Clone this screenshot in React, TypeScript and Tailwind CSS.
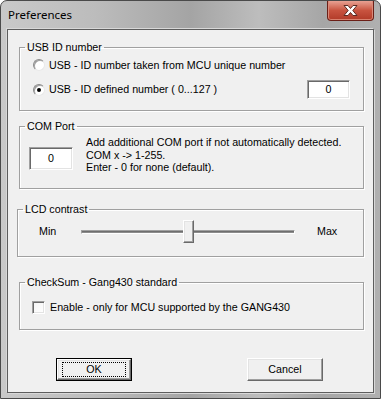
import React from "react";

const sunken =
  "border border-t-[#a0a0a0] border-l-[#a0a0a0] border-b-white border-r-white shadow-[inset_1px_1px_0_#696969,inset_-1px_-1px_0_#e3e3e3]";
const raised =
  "border border-t-white border-l-white border-b-[#696969] border-r-[#696969] shadow-[inset_-1px_-1px_0_#a0a0a0,inset_1px_1px_0_#e3e3e3]";

function Group({
  label,
  className,
  children,
}: {
  label: string;
  className: string;
  children: React.ReactNode;
}) {
  return (
    <fieldset
      className={`border border-[#a0a0a0] shadow-[1px_1px_0_white,inset_1px_1px_0_white] p-0 ${className}`}
    >
      <legend className="ml-[5px] px-[2px] leading-[14px]">{label}</legend>
      {children}
    </fieldset>
  );
}

function Radio({ checked }: { checked?: boolean }) {
  return (
    <span className="relative flex h-[12px] w-[12px] shrink-0 items-center justify-center rounded-full border border-t-[#8a8a8a] border-l-[#8a8a8a] border-b-[#e8e8e8] border-r-[#e8e8e8] bg-white shadow-[inset_1px_1px_0_#a0a0a0]">
      {checked && <span className="h-[4px] w-[4px] rounded-full bg-black" />}
    </span>
  );
}

function CloseButton() {
  return (
    <div className="flex h-[20px] w-[47px] items-center justify-center rounded-b-[4px] border border-t-0 border-[#6b1f17] bg-gradient-to-b from-[#e8a193] via-[#c8533f] to-[#b13a28] shadow-[inset_0_-1px_0_#d9826f,inset_1px_0_0_#d98a7a,inset_-1px_0_0_#d98a7a]">
      <svg width="17" height="13" viewBox="0 0 17 13">
        <path
          d="M2 1.5h4L8.5 4.5l2.5-3h4l-4.2 5 4.2 5h-4L8.5 8.5 6 11.5H2l4.2-5z"
          fill="white"
          stroke="#5a2a22"
          strokeWidth="1"
          strokeLinejoin="round"
        />
      </svg>
    </div>
  );
}

export default function App() {
  return (
    <div
      className="flex h-[399px] w-[381px] flex-col rounded-t-[7px] border border-[#4a4a4a] bg-[linear-gradient(90deg,#c9c9c9_0%,#bcbcbc_25%,#a4a4a4_50%,#bdbdbd_68%,#a6a6a6_85%,#b0b0b0_100%)] text-[10.7px] text-black"
      style={{ fontFamily: '"Liberation Sans", Arial, sans-serif' }}
    >
      <div className="flex h-[28px] shrink-0 items-start">
        <span
          className="ml-[7px] mt-[6px] text-[11.5px] leading-[16px] text-black"
          style={{ fontFamily: '"Noto Sans", "Open Sans", sans-serif' }}
        >
          Preferences
        </span>
        <div className="ml-auto mr-[6px]">
          <CloseButton />
        </div>
      </div>

      <div className="mb-[5px] ml-[6px] flex h-[364px] w-[367px] flex-col border border-[#5d5d5d] bg-[#f0f0f0] shadow-[1px_1px_0_#d8d8d8,-1px_-1px_0_#d8d8d8]">
        <Group label="USB ID number" className="ml-[11px] mt-[10px] h-[71px] w-[345px]">
          <div className="flex flex-col pl-[13px] pr-[13px] pt-[3px]">
            <div className="flex h-[16px] items-center gap-[4px]">
              <Radio />
              <span>USB - ID number taken from MCU unique number</span>
            </div>
            <div className="mt-[7px] flex h-[19px] items-center gap-[4px]">
              <Radio checked />
              <span>USB - ID defined number ( 0...127 )</span>
              <div className={`ml-auto flex h-[19px] w-[43px] items-center justify-center bg-white ${sunken}`}>
                0
              </div>
            </div>
          </div>
        </Group>

        <Group label="COM Port" className="ml-[11px] mt-[8px] h-[70px] w-[345px]">
          <div className="flex items-start pl-[9px] pt-[3px]">
            <div className={`mt-[11px] flex h-[23px] w-[44px] items-center justify-center bg-white ${sunken}`}>
              0
            </div>
            <div className="ml-[13px] leading-[12.5px]">
              <div>Add additional COM port if not automatically detected.</div>
              <div>COM x -&gt; 1-255.</div>
              <div>Enter - 0 for none (default).</div>
            </div>
          </div>
        </Group>

        <Group label="LCD contrast" className="ml-[9px] mt-[13px] h-[55px] w-[347px]">
          <div className="flex h-[31px] items-center pl-[21px]">
            <span className="w-[42px]">Min</span>
            <div className="relative flex h-[23px] w-[214px] items-center">
              <div className="h-[4px] w-full border border-t-[#a0a0a0] border-l-[#a0a0a0] border-b-white border-r-white bg-[#8c8c8c] shadow-[inset_0_1px_0_#6f6f6f]" />
              <div className={`absolute left-[102px] top-0 h-[23px] w-[11px] bg-[#f0f0f0] ${raised}`} />
            </div>
            <span className="ml-[22px]">Max</span>
          </div>
        </Group>

        <Group label="CheckSum - Gang430 standard" className="ml-[11px] mt-[18px] h-[55px] w-[345px]">
          <div className="flex items-center gap-[5px] pl-[12px] pt-[10px]">
            <span className={`h-[13px] w-[13px] bg-[linear-gradient(135deg,#f4f4f4,#ffffff)] ${sunken}`} />
            <span>Enable - only for MCU supported by the GANG430</span>
          </div>
        </Group>

        <div className="mt-[28px] flex">
          <button className="ml-[48px] flex h-[23px] w-[76px] items-center justify-center border border-black bg-[#f0f0f0] p-0">
            <div className={`flex h-full w-full items-center justify-center ${raised}`}>
              <div className="flex h-[15px] w-[64px] items-center justify-center border border-dotted border-black">
                OK
              </div>
            </div>
          </button>
          <button className={`ml-[115px] flex h-[23px] w-[76px] items-center justify-center bg-[#f0f0f0] p-0 ${raised}`}>
            Cancel
          </button>
        </div>
      </div>
    </div>
  );
}
